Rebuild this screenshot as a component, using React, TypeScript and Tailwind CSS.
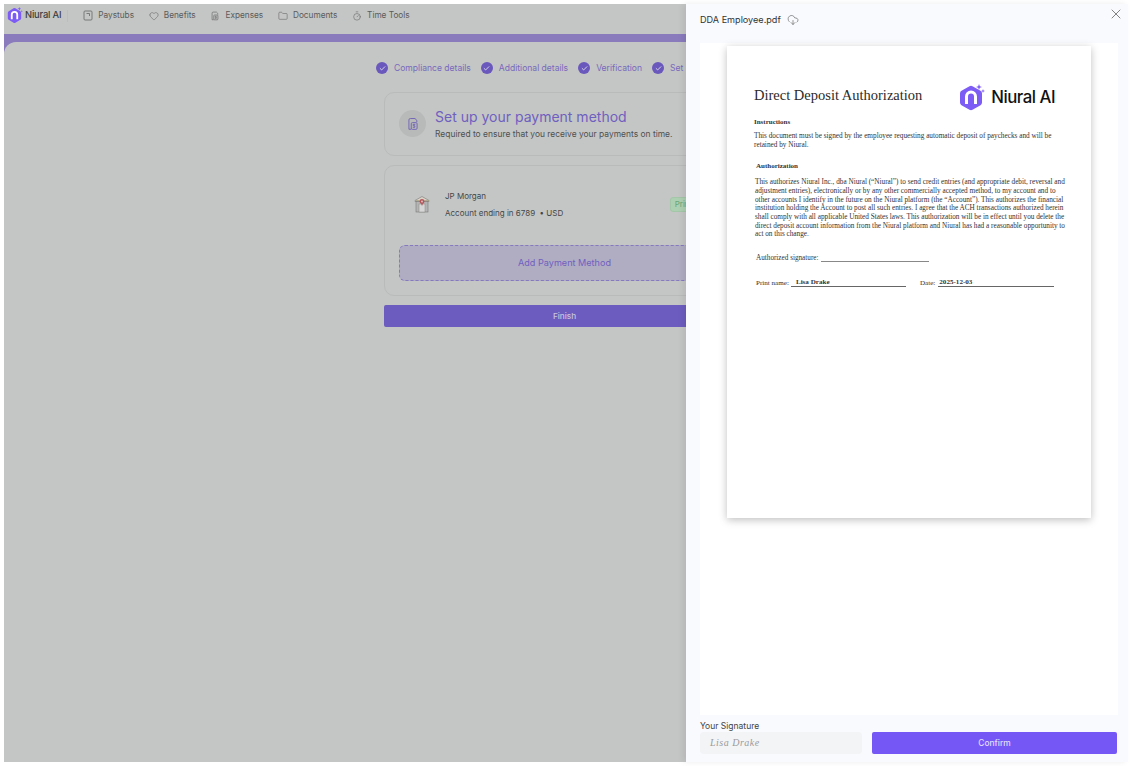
import { Check, CloudDownload, Folder, Heart, Timer, X } from "lucide-react";

function NiuralLogo({ size }: { size: number }) {
  return (
    <svg width={size} height={size} viewBox="0 0 28 28" fill="none">
      <path d="M12.5 2.2 a3 3 0 0 1 3 0 l8 4.6 a3 3 0 0 1 1.5 2.6 v9.2 a3 3 0 0 1 -1.5 2.6 l-8 4.6 a3 3 0 0 1 -3 0 l-8 -4.6 a3 3 0 0 1 -1.5 -2.6 v-9.2 a3 3 0 0 1 1.5 -2.6 z" fill="#7c5cf5" />
      <path d="M9.5 20 v-7.5 a4.5 4.5 0 0 1 9 0 V20" stroke="white" strokeWidth="3" />
      <path d="M22 0 l0.8 2.2 L25 3 l-2.2 .8 L22 6 l-.8 -2.2 L19 3 l2.2 -.8 z" fill="#7c5cf5" />
      <path d="M26 5 l0.5 1.5 L28 7 l-1.5 .5 L26 9 l-.5 -1.5 L24 7 l1.5 -.5 z" fill="#7c5cf5" />
    </svg>
  );
}

function StubIcon() {
  return (
    <svg width="10" height="11" viewBox="0 0 10 11" fill="none" stroke="#666" strokeWidth="0.8">
      <rect x="1" y="1" width="8" height="9" rx="1" />
      <path d="M3.5 3.5 h3 v2.5" />
    </svg>
  );
}

function ExpenseIcon({ size, color }: { size: number; color: string }) {
  return (
    <svg width={size} height={size} viewBox="0 0 12 12" fill="none" stroke={color} strokeWidth="0.8">
      <path d="M2.5 10.5 v-8 a1.2 1.2 0 0 1 1.2 -1.2 h4 l1.6 1.6 v1.5" />
      <path d="M2.5 10.5 h2" />
      <rect x="4.5" y="4.8" width="5" height="5.8" rx="1" />
      <path d="M8 6.3 h-1.8 v1.2 h1.4 v1.3 h-1.8" />
    </svg>
  );
}

function BankIcon() {
  return (
    <svg width="16" height="18" viewBox="0 0 16 18" fill="none">
      <path d="M1 5.5 L8 1.5 L15 5.5 V6.5 H1 z" fill="#d9d3c8" stroke="#7a7a78" strokeWidth="0.6" />
      <rect x="1" y="5.3" width="14" height="1.3" fill="#a39c7d" />
      <rect x="2" y="6.5" width="12" height="10.5" fill="#b3b4b3" stroke="#7a7a78" strokeWidth="0.6" />
      <rect x="5" y="9" width="6" height="8" fill="#d5d6d5" stroke="#8a8a88" strokeWidth="0.5" />
      <circle cx="8" cy="6.5" r="2.4" fill="#b4555a" />
      <circle cx="8" cy="6.5" r="0.9" fill="#d9c9c9" />
      <path d="M7 8.5 h2 l-1 2.5 z" fill="#b4555a" />
    </svg>
  );
}

function Step({ label }: { label: string }) {
  return (
    <div className="flex shrink-0 items-center gap-[6px]">
      <span className="flex h-[12px] w-[12px] items-center justify-center rounded-full bg-[#6a58bd]">
        <Check size={7} color="#e6e4ee" strokeWidth={3} />
      </span>
      <span className="text-[8.55px] text-[#7869bd]">{label}</span>
    </div>
  );
}

const navItems = [
  { label: "Paystubs", icon: <StubIcon /> },
  { label: "Benefits", icon: <Heart size={10} color="#666" strokeWidth={1.4} /> },
  { label: "Expenses", icon: <ExpenseIcon size={10} color="#666" /> },
  { label: "Documents", icon: <Folder size={10} color="#666" strokeWidth={1.4} /> },
  { label: "Time Tools", icon: <Timer size={10} color="#666" strokeWidth={1.4} /> },
];

const instructions = [
  "This document must be signed by the employee requesting automatic deposit of paychecks and will be",
  "retained by Niural.",
];

const authorization = [
  "This authorizes Niural Inc., dba Niural (“Niural”) to send credit entries (and appropriate debit, reversal and",
  "adjustment entries), electronically or by any other commercially accepted method, to my account and to",
  "other accounts I identify in the future on the Niural platform (the “Account”). This authorizes the financial",
  "institution holding the Account to post all such entries. I agree that the ACH transactions authorized herein",
  "shall comply with all applicable United States laws. This authorization will be in effect until you delete the",
  "direct deposit account information from the Niural platform and Niural has had a reasonable opportunity to",
  "act on this change.",
];

function BackgroundPage() {
  return (
    <div className="h-full min-w-0 flex-1 overflow-hidden bg-[#c4c6c5]">
      <div className="flex h-full w-[1121px] flex-col font-['Inter',sans-serif]">
        <div className="flex h-[30px] shrink-0 items-center pb-[7px] pl-[2px]">
          <NiuralLogo size={17} />
          <span className="ml-[2px] text-[9.4px] font-medium tracking-[-0.2px] text-[#3d3d3d]">Niural AI</span>
          <div className="ml-[6px] h-[12px] w-px bg-[#bcbebd]" />
          <div className="ml-[15px] flex items-center gap-[14.75px]">
            {navItems.map((item) => (
              <div key={item.label} className="flex items-center gap-[5px]">
                {item.icon}
                <span className="text-[8.25px] text-[#5a5b5b]">{item.label}</span>
              </div>
            ))}
          </div>
        </div>
        <div className="flex-1 bg-[#8a7bbd] pt-[8px]">
          <div className="flex h-full flex-col items-center rounded-tl-[12px] bg-[#c4c6c5]">
            <div className="mt-[20px] flex w-[377px] items-center gap-[10px] self-center">
              <Step label="Compliance details" />
              <Step label="Additional details" />
              <Step label="Verification" />
              <Step label="Set up payment" />
            </div>
            <div className="mt-[17px] flex h-[64px] w-[361px] items-center rounded-[10px] border border-[#b9bbba] px-[14px]">
              <div className="flex h-[27px] w-[27px] shrink-0 items-center justify-center rounded-full bg-[#b8bab9]">
                <ExpenseIcon size={14} color="#6f62b5" />
              </div>
              <div className="ml-[9px] pt-[1px]">
                <div className="text-[14px] leading-[18px] text-[#6f60c0]">Set up your payment method</div>
                <div className="mt-[2px] text-[8.45px] leading-[12px] text-[#4f5050]">Required to ensure that you receive your payments on time.</div>
              </div>
            </div>
            <div className="mt-[9px] flex h-[131px] w-[361px] flex-col rounded-[10px] border border-[#b9bbba] px-[14px]">
              <div className="flex h-[79px] items-center pb-[2px]">
                <div className="ml-[15px] flex w-[16px] justify-center"><BankIcon /></div>
                <div className="ml-[15px]">
                  <div className="text-[8px] leading-[12px] text-[#454646]">JP Morgan</div>
                  <div className="mt-[5px] text-[8px] leading-[12px] text-[#454646]">Account ending in 6789 &nbsp;• USD</div>
                </div>
                <div className="ml-auto mr-[21px] flex h-[15px] items-center rounded-[3px] border border-[#a3c7a8] bg-[#aed0b2] px-[4px] text-[8px] text-[#6aa674]">Primary</div>
              </div>
              <div className="flex h-[36px] items-center justify-center rounded-[6px] border border-dashed border-[#8579c0] bg-[#b0adc3] pt-[1px] text-[9.1px] text-[#6f60c0]">
                Add Payment Method
              </div>
            </div>
            <div className="mt-[9px] flex h-[22px] w-[361px] items-center justify-center rounded-[2px] bg-[#6c5cbf] pt-[1px] text-[8.2px] font-medium text-[#c9c5de]">
              Finish
            </div>
          </div>
        </div>
      </div>
    </div>
  );
}

function DocumentPage() {
  return (
    <div className="h-[472px] w-[364px] bg-white pl-[27px] pr-[24px] pt-[38px] font-['Liberation_Serif',serif] text-[#333] shadow-[0_2px_8px_rgba(0,0,0,0.25)]">
      <div className="flex h-[24px] items-center">
        <span className="text-[14.5px] text-[#2b2b2b]">Direct Deposit Authorization</span>
        <div className="ml-auto mr-[12px] mt-[3px] flex items-center gap-[6px]">
          <NiuralLogo size={28} />
          <span className="font-['Inter',sans-serif] text-[16.8px] font-medium tracking-[-0.5px] text-[#111]">Niural AI</span>
        </div>
      </div>
      <div className="mt-[10px] text-[7px] font-bold leading-[8px]">Instructions</div>
      <div className="mt-[6px] text-[7.25px] leading-[8.7px]">
        {instructions.map((line) => (
          <div key={line} className="whitespace-nowrap">{line}</div>
        ))}
      </div>
      <div className="ml-[2px] mt-[13px] text-[7px] font-bold leading-[8px]">Authorization</div>
      <div className="ml-[1px] mt-[8px] text-[7.24px] leading-[8.65px]">
        {authorization.map((line) => (
          <div key={line} className="whitespace-nowrap">{line}</div>
        ))}
      </div>
      <div className="ml-[2px] mt-[15px] flex items-end text-[7.2px] leading-[8px]">
        <span>Authorized signature:</span>
        <span className="ml-[3px] h-[8px] w-[108px] border-b border-[#888]" />
      </div>
      <div className="ml-[2px] mt-[16px] flex items-end text-[7.1px] leading-[8px]">
        <span>Print name:</span>
        <span className="ml-[2px] w-[115px] border-b border-[#666] pl-[5px] font-bold">Lisa Drake</span>
        <span className="ml-[14px]">Date:</span>
        <span className="ml-[3px] w-[116px] border-b border-[#666] pl-[1px] font-bold">2025-12-03</span>
      </div>
    </div>
  );
}

function SignatureDrawer() {
  return (
    <div className="z-10 flex h-full w-[442px] shrink-0 flex-col bg-[#f9fafd] pl-[14px] pr-[10px] font-['Inter',sans-serif] shadow-[-3px_0_6px_rgba(0,0,0,0.08)]">
      <div className="relative flex h-[39px] shrink-0 items-start gap-[6px] pt-[10px]">
        <span className="text-[9.1px] leading-[12px] text-[#333]">DDA Employee.pdf</span>
        <CloudDownload size={12} color="#555" strokeWidth={1.2} />
        <X size={16} color="#555" strokeWidth={1.1} className="absolute right-[-6px] top-[2px]" />
      </div>
      <div className="flex min-h-0 flex-1 justify-center bg-white pt-[3px]">
        <DocumentPage />
      </div>
      <div className="flex h-[47px] shrink-0 flex-col pt-[6px]">
        <div className="text-[8.5px] leading-[10px] text-[#444]">Your Signature</div>
        <div className="mt-[1px] flex gap-[10px]">
          <div className="flex h-[22px] w-[162px] items-center rounded-[4px] bg-[#f3f4f6] pb-[2px] pl-[10px] font-['Liberation_Serif',serif] text-[10px] italic tracking-[0.5px] text-[#9a9b9d]">
            Lisa Drake
          </div>
          <div className="flex h-[22px] w-[245px] items-center justify-center rounded-[2px] bg-[#7557f6] text-[8.4px] font-medium text-[#e4deff]">
            Confirm
          </div>
        </div>
      </div>
    </div>
  );
}

export default function App() {
  return (
    <main className="h-[766px] w-[1132px] overflow-hidden bg-white p-[4px]">
      <div className="flex h-full">
        <BackgroundPage />
        <SignatureDrawer />
      </div>
    </main>
  );
}
